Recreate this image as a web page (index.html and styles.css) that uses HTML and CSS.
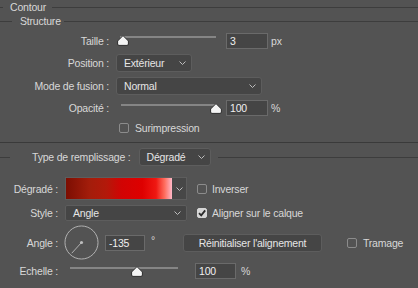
FILE: index.html
```html
<!DOCTYPE html>
<html lang="fr">
<head>
<meta charset="utf-8">
<title>Contour</title>
<link rel="stylesheet" href="styles.css">
</head>
<body>
<div class="panel">
  <div class="head h-contour"><span class="rule lead"></span><span class="title">Contour</span><span class="rule"></span></div>
  <div class="head h-struct"><span class="rule lead"></span><span class="title">Structure</span><span class="rule"></span></div>

  <div class="row r-taille">
    <span class="lbl1">Taille :</span>
    <div class="slider s-taille">
      <div class="track"></div>
      <svg class="thumb t-taille" viewBox="0 0 12 11"><path d="M6 .6 L11.4 6 V9 Q11.4 10.4 10 10.4 H2 Q.6 10.4 .6 9 V6 Z"/></svg>
    </div>
    <div class="field f-taille">3</div><span class="unit">px</span>
  </div>

  <div class="row r-pos">
    <span class="lbl1">Position :</span>
    <div class="select sel-pos"><span>Extérieur</span><svg class="chev" viewBox="0 0 7 4"><path d="M.5 .5 L3.5 3.5 L6.5 .5"/></svg></div>
  </div>

  <div class="row r-mode">
    <span class="lbl1">Mode de fusion :</span>
    <div class="select sel-mode"><span>Normal</span><svg class="chev" viewBox="0 0 7 4"><path d="M.5 .5 L3.5 3.5 L6.5 .5"/></svg></div>
  </div>

  <div class="row r-opac">
    <span class="lbl1">Opacité :</span>
    <div class="slider s-opac">
      <div class="track"></div>
      <svg class="thumb t-opac" viewBox="0 0 12 11"><path d="M6 .6 L11.4 6 V9 Q11.4 10.4 10 10.4 H2 Q.6 10.4 .6 9 V6 Z"/></svg>
    </div>
    <div class="field f-opac">100</div><span class="unit">%</span>
  </div>

  <div class="row r-surimp">
    <span class="check"></span><span class="clabel">Surimpression</span>
  </div>

  <div class="sep"></div>

  <div class="row r-type">
    <span class="rule r-lead"></span>
    <span class="type-lbl">Type de remplissage :</span>
    <div class="select sel-type"><span>Dégradé</span><svg class="chev" viewBox="0 0 7 4"><path d="M.5 .5 L3.5 3.5 L6.5 .5"/></svg></div>
    <span class="rule r-tail"></span>
  </div>

  <div class="row r-grad">
    <span class="lbl2">Dégradé :</span>
    <div class="swatch">
      <div class="grad"></div>
      <div class="swarrow"><svg class="chev" viewBox="0 0 7 4"><path d="M.5 .5 L3.5 3.5 L6.5 .5"/></svg></div>
    </div>
    <span class="check c-right"></span><span class="clabel c-lbl">Inverser</span>
  </div>

  <div class="row r-style">
    <span class="lbl2">Style :</span>
    <div class="select sel-style"><span>Angle</span><svg class="chev" viewBox="0 0 7 4"><path d="M.5 .5 L3.5 3.5 L6.5 .5"/></svg></div>
    <span class="check checked c-right"><svg viewBox="0 0 10 10"><path d="M2 5.2 L4.2 7.4 L8.2 2.4"/></svg></span><span class="clabel c-lbl">Aligner sur le calque</span>
  </div>

  <div class="row r-angle">
    <span class="lbl2">Angle :</span>
    <svg class="dial" viewBox="0 0 36 36">
      <circle cx="18" cy="18" r="17"/>
      <line x1="18" y1="18" x2="8" y2="29"/>
      <circle class="dot" cx="18" cy="18" r="1.6"/>
    </svg>
    <div class="field f-angle">-135</div>
    <span class="deg">°</span>
    <div class="btn">Réinitialiser l'alignement</div>
    <span class="check c-tram"></span><span class="clabel">Tramage</span>
  </div>

  <div class="row r-echelle">
    <span class="lbl2">Echelle :</span>
    <div class="slider s-ech">
      <div class="track"></div>
      <svg class="thumb t-ech" viewBox="0 0 12 11"><path d="M6 .6 L11.4 6 V9 Q11.4 10.4 10 10.4 H2 Q.6 10.4 .6 9 V6 Z"/></svg>
    </div>
    <div class="field f-ech">100</div><span class="unit u-ech">%</span>
  </div>
</div>
</body>
</html>
```

FILE: styles.css
```css
* { box-sizing: border-box; }
html, body { margin: 0; padding: 0; }
body {
  width: 418px;
  height: 288px;
  overflow: hidden;
  background: #535353;
  color: #d8d8d8;
  font-family: "Liberation Sans", Arial, sans-serif;
  font-size: 10.5px;
  letter-spacing: -0.2px;
}
.panel { display: flex; flex-direction: column; }

.head { display: flex; align-items: center; height: 14px; }
.rule { height: 1px; background: #3d3d3d; flex: 1; }
.rule.lead { flex: none; }
.h-contour .lead { width: 3px; }
.h-contour .title { margin: 0 6px 0 7px; }
.h-struct .lead { width: 12px; }
.h-struct .title { margin: 0 3px 0 8px; }

.row { display: flex; align-items: center; flex: none; }
.lbl1 { width: 110px; text-align: right; padding-right: 1px; flex: none; }
.lbl2 { width: 59px; text-align: right; padding-right: 1px; flex: none; }

.slider { position: relative; height: 16px; flex: none; align-self: flex-start; }
.slider .track { height: 2px; background: #858585; margin-top: 4px; }
.thumb { position: absolute; top: 3px; width: 12px; height: 11px; }
.thumb path { fill: #f4f4f4; stroke: #2c2c2c; stroke-width: 1; }

.field {
  height: 16px;
  border: 1px solid #6a6a6a;
  background: #454545;
  color: #f0f0f0;
  padding-left: 3px;
  line-height: 14px;
  flex: none;
}
.unit { margin-left: 3px; }

.select {
  display: flex;
  align-items: center;
  justify-content: space-between;
  height: 18px;
  border: 1px solid #5d5d5d;
  border-radius: 3px;
  background: #454545;
  color: #e6e6e6;
  padding: 0 5px 0 7px;
  flex: none;
}
.chev { width: 7px; height: 4px; }
.chev path { fill: none; stroke: #bdbdbd; stroke-width: 1; }

.check {
  width: 10px;
  height: 10px;
  border: 1px solid #8c8c8c;
  border-radius: 2px;
  flex: none;
}
.check.checked { background: #d6d6d6; border-color: #d6d6d6; }
.check svg { width: 10px; height: 10px; display: block; margin: -1px; }
.check svg path { fill: none; stroke: #2b2b2b; stroke-width: 1.8; }
.clabel { margin-left: 6px; }

/* Structure rows */
.r-taille { margin-top: 5px; height: 16px; }
.s-taille { margin-left: 10px; width: 96px; }
.s-taille .track { margin-top: 3px; }
.t-taille { left: -3px; top: 2px; }
.f-taille { margin-left: 10px; width: 42px; }

.r-pos { margin-top: 5px; height: 18px; }
.sel-pos { margin-left: 6px; width: 76px; }

.r-mode { margin-top: 5px; height: 18px; }
.sel-mode { margin-left: 6px; width: 146px; }

.r-opac { margin-top: 5px; height: 16px; }
.s-opac { margin-left: 11px; width: 94px; }
.t-opac { left: 89px; }
.f-opac { margin-left: 11px; width: 42px; }

.r-surimp { margin-top: 7px; height: 10px; padding-left: 119px; }

.sep { margin-top: 9px; height: 1px; background: #3a3a3a; flex: none; }

/* Remplissage */
.r-type { margin-top: 5px; height: 18px; }
.r-lead { flex: none; width: 10px; }
.type-lbl { margin-left: 22px; }
.sel-type { margin-left: 8px; width: 72px; }
.r-tail { margin-left: 7px; }

.r-grad { margin-top: 11px; height: 23px; }
.swatch {
  margin-left: 6px;
  width: 122px;
  height: 23px;
  border: 1px solid #5d5d5d;
  display: flex;
  flex: none;
}
.grad {
  flex: 1;
  background: linear-gradient(to right, #7c0e02 0%, #a31d0b 22%, #b3190a 38%, #d10404 52%, #de0000 72%, #ef1812 85%, #ff6d5e 93%, #ffb8c8 100%);
}
.swarrow {
  width: 14px;
  background: #474747;
  display: flex;
  align-items: center;
  justify-content: center;
}
.c-right { margin-left: 10px; }
.c-lbl { margin-left: 5px; }

.r-style { margin-top: 5px; height: 16px; }
.sel-style { margin-left: 6px; width: 122px; height: 16px; border-radius: 2px; }

.r-angle { margin-top: 4px; height: 35px; }
.dial { margin-left: 5px; width: 35px; height: 35px; flex: none; }
.dial circle, .dial line { fill: none; stroke: #b4b4b4; stroke-width: 1; }
.dial .dot { fill: #bdbdbd; stroke: none; }
.f-angle { margin-left: 6px; width: 40px; }
.deg { margin-left: 6px; width: 10px; align-self: flex-start; margin-top: 9px; }
.btn {
  margin-left: 22px;
  width: 139px;
  height: 18px;
  border: 1px solid #5d5d5d;
  border-radius: 3px;
  background: #454545;
  color: #e6e6e6;
  display: flex;
  align-items: center;
  justify-content: center;
  flex: none;
}
.c-tram { margin-left: 25px; }

.r-echelle { margin-top: 3px; height: 16px; }
.s-ech { margin-left: 11px; width: 108px; }
.t-ech { left: 61px; }
.f-ech { margin-left: 17px; width: 41px; }
.u-ech { margin-left: 5px; }
```
